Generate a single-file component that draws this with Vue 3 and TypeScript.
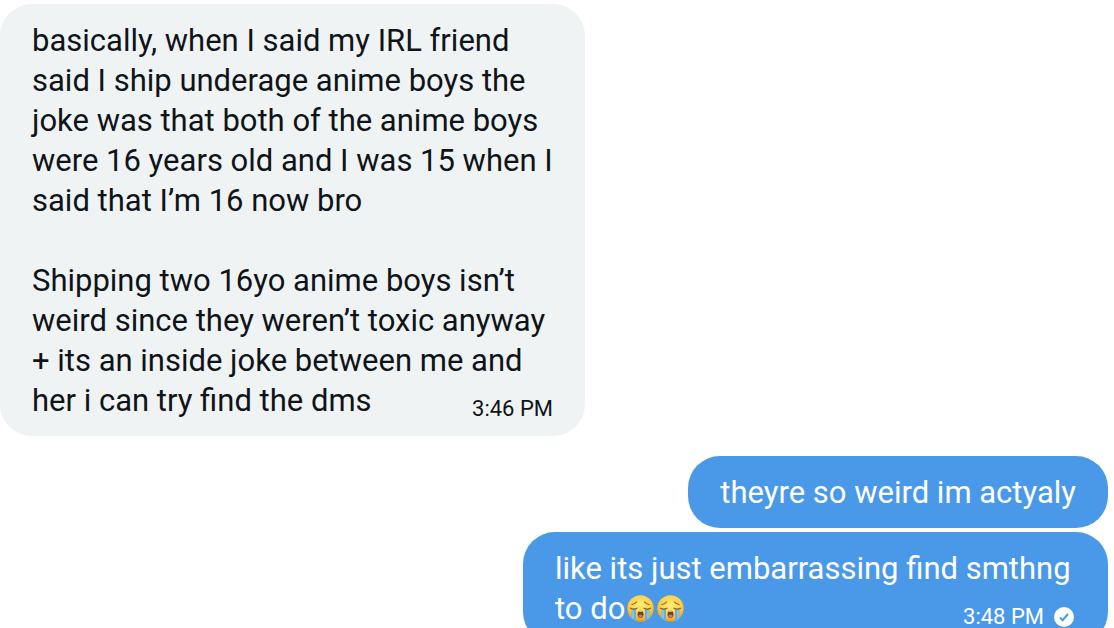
<script setup lang="ts">
interface Message {
  id: number
  own: boolean
  lines: string[]
  tears?: number
  time?: string
  datetime?: string
}

const messages: Message[] = [
  {
    id: 1,
    own: false,
    lines: [
      'basically, when I said my IRL friend',
      'said I ship underage anime boys the',
      'joke was that both of the anime boys',
      'were 16 years old and I was 15 when I',
      'said that I’m 16 now bro',
      '',
      'Shipping two 16yo anime boys isn’t',
      'weird since they weren’t toxic anyway',
      '+ its an inside joke between me and',
      'her i can try find the dms',
    ],
    time: '3:46 PM',
    datetime: '15:46',
  },
  { id: 2, own: true, lines: ['theyre so weird im actyaly'] },
  {
    id: 3,
    own: true,
    lines: ['like its just embarrassing find smthng', 'to do'],
    tears: 2,
    time: '3:48 PM',
    datetime: '15:48',
  },
]
</script>

<template>
  <main class="chat">
    <article
      v-for="message in messages"
      :key="message.id"
      class="bubble"
      :class="{ own: message.own, timed: message.time }"
    >
      <div class="text">
        <div v-for="(line, index) in message.lines" :key="index" class="line">
          <span>{{ line }}</span>
          <template v-if="index === message.lines.length - 1">
            <svg
              v-for="n in message.tears ?? 0"
              :key="n"
              class="emoji"
              viewBox="0 0 30 30"
              role="img"
              aria-label="loudly crying face"
            >
              <defs>
                <radialGradient :id="`face-${n}`" cx="50%" cy="38%" r="62%">
                  <stop offset="0" stop-color="#ffed76" />
                  <stop offset="0.65" stop-color="#fbcf45" />
                  <stop offset="1" stop-color="#dc982c" />
                </radialGradient>
              </defs>
              <circle cx="15.500" cy="14.500" r="13.300" :fill="`url(#face-${n})`" />
              <path d="M6.500 15h4.500v12q-2.500-.8-4.500-2.500zM20 15h4.500v9.500q-2 1.700-4.500 2.500z" fill="#6aaedb" />
              <path d="M8 16v8.500M23 16v8.500" stroke="#9ad3ee" stroke-width="1.200" />
              <path
                d="M5.500 14.200q3.200 1.800 6.500 0M19 14.200q3.200 1.800 6.500 0M7 10.500q3-.5 4.500-2.500M24 10.500q-3-.5-4.500-2.500"
                fill="none"
                stroke="#8a6024"
                stroke-width="1.200"
                stroke-linecap="round"
              />
              <ellipse cx="15.500" cy="20.300" rx="3" ry="3.600" fill="#70451d" />
              <ellipse cx="15.500" cy="22" rx="2" ry="1.500" fill="#d9786a" />
              <path d="M13.500 18q2-1.500 4 0z" fill="#fff" />
            </svg>
          </template>
        </div>
      </div>
      <footer v-if="message.time" class="meta">
        <time :datetime="message.datetime">{{ message.time }}</time>
        <svg v-if="message.own" class="sent" viewBox="0 0 20 20" role="img" aria-label="Sent">
          <circle cx="10" cy="10" r="10" fill="#fff" />
          <path d="M6 10.500l2.600 2.700L14 7" fill="none" stroke="#4a99e9" stroke-width="2" />
        </svg>
      </footer>
    </article>
  </main>
</template>

<style>
html {
  overflow: hidden;
  background: #fff;
}
</style>

<style scoped>
.chat {
  display: flex;
  flex-direction: column;
  align-items: flex-start;
  gap: 4px;
  padding: 4px 6px 0 0;
  font-family: Roboto, "Liberation Sans", sans-serif;
  font-size: 31px;
  line-height: 40px;
  color: #0f1419;
}

.bubble {
  position: relative;
  box-sizing: border-box;
  padding: 17px 32px 15px;
  border-radius: 32px;
  background: #eff3f4;
}

.bubble.timed {
  width: 52.8%;
}

.bubble.own {
  align-self: flex-end;
  background: #4a99e9;
  color: #fff;
}

.bubble:not(.own) + .own {
  margin-top: 16px;
}

.line {
  display: flex;
  align-items: center;
  min-height: 40px;
  white-space: nowrap;
}

.emoji {
  flex: none;
  width: 30px;
  height: 30px;
}

.meta {
  position: absolute;
  right: 32px;
  bottom: 11px;
  display: flex;
  align-items: center;
  gap: 10px;
  font-size: 22px;
  line-height: 32px;
}

.own .meta {
  right: 34px;
}

.sent {
  width: 20px;
  height: 20px;
}
</style>
